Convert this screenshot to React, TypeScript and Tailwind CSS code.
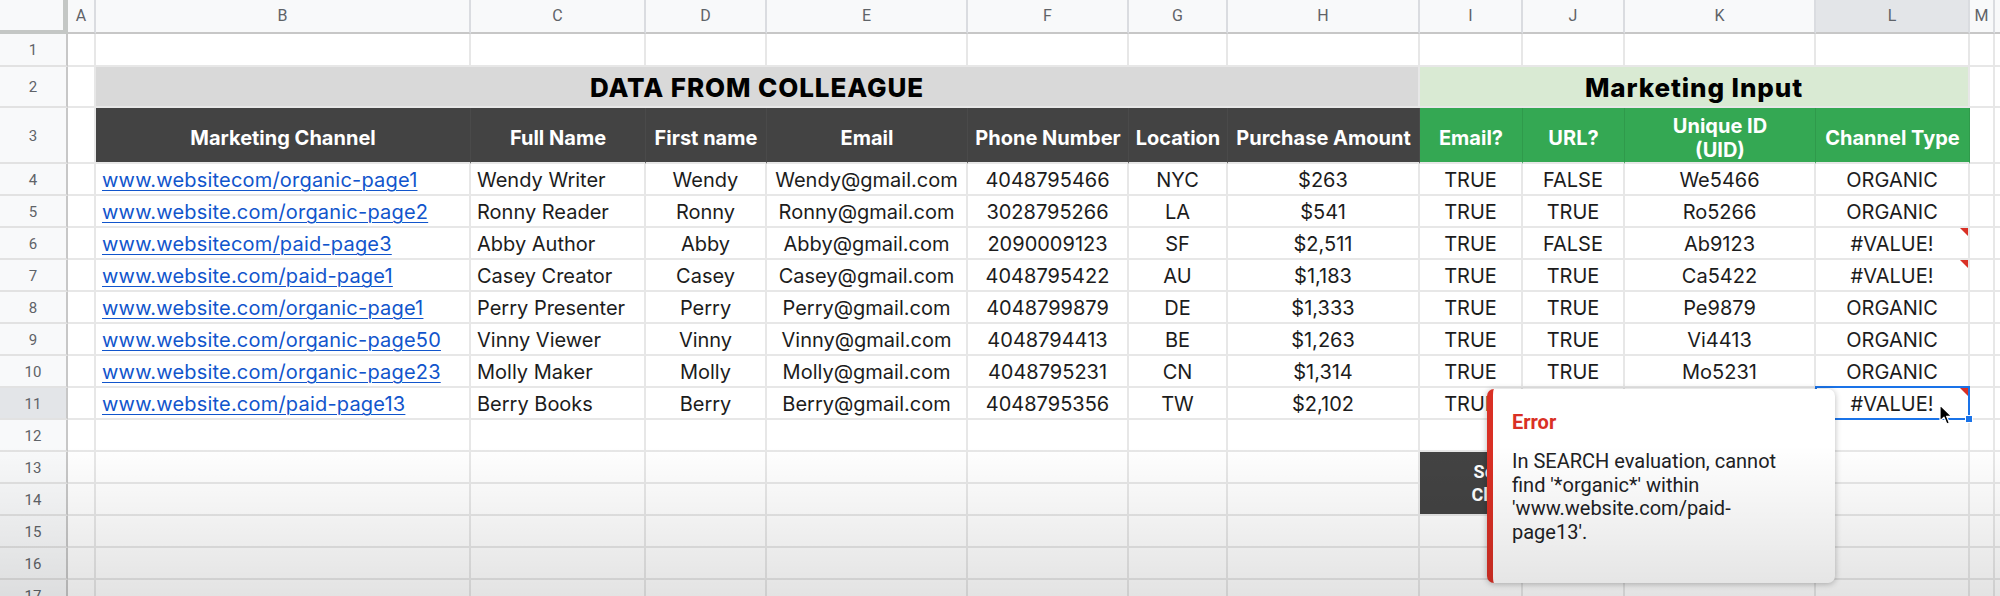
import React from "react";

const COLS = ["A", "B", "C", "D", "E", "F", "G", "H", "I", "J", "K", "L", "M"];

type Row = {
  url: string;
  full: string;
  first: string;
  email: string;
  phone: string;
  loc: string;
  amount: string;
  isEmail: string;
  isUrl: string;
  uid: string;
  channel: string;
  flag?: boolean;
};

const rows: Row[] = [
  { url: "www.websitecom/organic-page1", full: "Wendy Writer", first: "Wendy", email: "Wendy@gmail.com", phone: "4048795466", loc: "NYC", amount: "$263", isEmail: "TRUE", isUrl: "FALSE", uid: "We5466", channel: "ORGANIC" },
  { url: "www.website.com/organic-page2", full: "Ronny Reader", first: "Ronny", email: "Ronny@gmail.com", phone: "3028795266", loc: "LA", amount: "$541", isEmail: "TRUE", isUrl: "TRUE", uid: "Ro5266", channel: "ORGANIC" },
  { url: "www.websitecom/paid-page3", full: "Abby Author", first: "Abby", email: "Abby@gmail.com", phone: "2090009123", loc: "SF", amount: "$2,511", isEmail: "TRUE", isUrl: "FALSE", uid: "Ab9123", channel: "#VALUE!", flag: true },
  { url: "www.website.com/paid-page1", full: "Casey Creator", first: "Casey", email: "Casey@gmail.com", phone: "4048795422", loc: "AU", amount: "$1,183", isEmail: "TRUE", isUrl: "TRUE", uid: "Ca5422", channel: "#VALUE!", flag: true },
  { url: "www.website.com/organic-page1", full: "Perry Presenter", first: "Perry", email: "Perry@gmail.com", phone: "4048799879", loc: "DE", amount: "$1,333", isEmail: "TRUE", isUrl: "TRUE", uid: "Pe9879", channel: "ORGANIC" },
  { url: "www.website.com/organic-page50", full: "Vinny Viewer", first: "Vinny", email: "Vinny@gmail.com", phone: "4048794413", loc: "BE", amount: "$1,263", isEmail: "TRUE", isUrl: "TRUE", uid: "Vi4413", channel: "ORGANIC" },
  { url: "www.website.com/organic-page23", full: "Molly Maker", first: "Molly", email: "Molly@gmail.com", phone: "4048795231", loc: "CN", amount: "$1,314", isEmail: "TRUE", isUrl: "TRUE", uid: "Mo5231", channel: "ORGANIC" },
  { url: "www.website.com/paid-page13", full: "Berry Books", first: "Berry", email: "Berry@gmail.com", phone: "4048795356", loc: "TW", amount: "$2,102", isEmail: "TRUE", isUrl: "TRUE", uid: "Be5356", channel: "#VALUE!", flag: true },
];

const cell = "border-r-2 border-b-2 border-[#e7e7e7] flex items-center pt-[2px] overflow-hidden whitespace-nowrap";

const RowNum = ({ n, active = false }: { n: number; active?: boolean }) => (
  <div
    className={`flex items-center justify-center pt-[2px] border-r-2 border-r-[#c7c7c7] border-b-2 border-b-[#e2e2e2] font-['Roboto',sans-serif] text-[15px] text-[#5f6368] ${active ? "bg-[#e3e5e8]" : "bg-[#f8f9fa]"}`}
  >
    {n}
  </div>
);

const ErrorFlag = () => (
  <span className="absolute top-0 right-0 w-0 h-0 border-l-[8px] border-l-transparent border-t-[8px] border-t-[#d93025]" />
);

const BlankRow = ({ n }: { n: number }) => (
  <>
    <RowNum n={n} />
    {COLS.map((c) => (
      <div key={c} className={cell} />
    ))}
    <div className="border-b-2 border-[#e7e7e7]" />
  </>
);

export default function App() {
  return (
    <div className="relative w-[2000px] h-[596px] overflow-hidden bg-white">
      <div className="grid grid-cols-[68px_28px_375px_175px_121px_201px_161px_99px_192px_103px_102px_191px_154px_25px_5px] grid-rows-[34px_33px_41px_56px_repeat(14,32px)] font-['Inter',sans-serif] text-[20px] text-[#1c1c1c]">
        {/* column letters */}
        <div className="bg-[#f8f9fa] border-r-[5px] border-b-[4px] border-[#c4c7c5]" />
        {COLS.map((c) => (
          <div
            key={c}
            className={`flex items-center justify-center border-r-2 border-r-[#dadce0] border-b-2 border-b-[#c7c7c7] font-['Roboto',sans-serif] text-[16px] text-[#5f6368] ${c === "L" ? "bg-[#e3e5e8]" : "bg-[#f8f9fa]"}`}
          >
            {c}
          </div>
        ))}
        <div className="bg-[#f8f9fa] border-b-2 border-[#c7c7c7]" />

        {/* row 1 */}
        <BlankRow n={1} />

        {/* row 2: section titles */}
        <RowNum n={2} />
        <div className={cell} />
        <div className="col-span-7 flex items-center justify-center pt-[2px] bg-[#d9d9d9] border-r-2 border-b-2 border-[#e7e7e7] font-extrabold text-[26px] text-black tracking-[0.9px]">
          DATA FROM COLLEAGUE
        </div>
        <div className="col-span-4 flex items-center justify-center pt-[2px] bg-[#d9ead3] border-r-2 border-b-2 border-[#e7e7e7] font-extrabold text-[26px] text-black tracking-[0.9px]">
          Marketing Input
        </div>
        <div className={cell} />
        <div className="border-b-2 border-[#e7e7e7]" />

        {/* row 3: headers */}
        <RowNum n={3} />
        <div className={cell} />
        {["Marketing Channel", "Full Name", "First name", "Email", "Phone Number", "Location", "Purchase Amount"].map((h) => (
          <div key={h} className="flex items-center justify-center pt-[5px] bg-[#434343] border-r border-r-[#4a4a4a] border-b-2 border-b-[#e7e7e7] font-bold text-white whitespace-nowrap">
            {h}
          </div>
        ))}
        {["Email?", "URL?", "Unique ID\n(UID)", "Channel Type"].map((h) => (
          <div key={h} className="flex items-center justify-center pt-[5px] text-center bg-[#34a853] border-r border-r-[#2f9a4b] border-b-2 border-b-[#e7e7e7] font-bold text-white whitespace-pre-line leading-[24px]">
            {h}
          </div>
        ))}
        <div className={cell} />
        <div className="border-b-2 border-[#e7e7e7]" />

        {/* data rows */}
        {rows.map((r, i) => {
          const last = i === rows.length - 1;
          return (
            <React.Fragment key={r.uid}>
              <RowNum n={i + 4} active={last} />
              <div className={cell} />
              <div className={`${cell} px-[6px]`}>
                <span className="text-[#1155cc] underline underline-offset-[3px] decoration-[1px] tracking-[0.2px]">{r.url}</span>
              </div>
              <div className={`${cell} px-[6px]`}>{r.full}</div>
              <div className={`${cell} justify-center`}>{r.first}</div>
              <div className={`${cell} justify-center`}>{r.email}</div>
              <div className={`${cell} justify-center`}>{r.phone}</div>
              <div className={`${cell} justify-center`}>{r.loc}</div>
              <div className={`${cell} justify-center`}>{r.amount}</div>
              <div className={`${cell} justify-center`}>{r.isEmail}</div>
              <div className={`${cell} justify-center`}>{r.isUrl}</div>
              <div className={`${cell} justify-center`}>{r.uid}</div>
              <div className={`${cell} justify-center relative overflow-visible`}>
                {r.channel}
                {r.flag && <ErrorFlag />}
                {last && (
                  <>
                    <span className="absolute -left-[1px] -top-[2px] -right-[2px] -bottom-[2px] border-2 border-[#1a73e8]" />
                    <span className="absolute -right-[5px] -bottom-[5px] w-[8px] h-[8px] bg-[#1a73e8] border border-white" />
                  </>
                )}
              </div>
              <div className={cell} />
              <div className="border-b-2 border-[#e7e7e7]" />
            </React.Fragment>
          );
        })}

        {/* rows 12 - 17 */}
        <BlankRow n={12} />

        <RowNum n={13} />
        {COLS.slice(0, 8).map((c) => (
          <div key={c} className={cell} />
        ))}
        <div className="col-start-10 col-span-2 row-start-14 row-span-2 flex flex-col items-center justify-center bg-[#434343] border-b-2 border-[#e7e7e7] font-['Roboto',sans-serif] font-bold text-[18px] leading-[23px] text-white">
          <span>Search Data</span>
          <span>Click Counts</span>
        </div>
        <div className={cell} />
        <div className={cell} />
        <div className={cell} />
        <div className="border-b-2 border-[#e7e7e7]" />

        <RowNum n={14} />
        {COLS.slice(0, 8).map((c) => (
          <div key={c} className={cell} />
        ))}
        <div className={cell} />
        <div className={cell} />
        <div className={cell} />
        <div className="border-b-2 border-[#e7e7e7]" />

        <BlankRow n={15} />
        <BlankRow n={16} />
        <BlankRow n={17} />
      </div>

      {/* error tooltip */}
      <div className="absolute left-[1487px] top-[389px] w-[348px] h-[194px] bg-white rounded-[7px] border-l-[6px] border-l-[#d93025] shadow-[0_1px_6px_rgba(0,0,0,0.28)] pl-[19px] pt-[21px] font-['Roboto',sans-serif]">
        <div className="text-[20px] leading-[24px] font-bold text-[#d93025]">Error</div>
        <div className="mt-[16px] w-[280px] text-[20px] leading-[23.5px] text-[#202124]">
          In SEARCH evaluation, cannot find '*organic*' within 'www.website.com/paid-page13'.
        </div>
      </div>

      {/* mouse pointer */}
      <svg className="absolute left-[1939px] top-[404px]" width="14" height="22" viewBox="0 0 14 22">
        <path d="M1 1 L1 17 L5 13.2 L7.8 20 L10.4 18.9 L7.6 12.3 L12.6 12.3 Z" fill="#000" stroke="#fff" strokeWidth="1.2" strokeLinejoin="round" />
      </svg>

      {/* video-ish shading at the bottom */}
      <div className="absolute left-0 right-0 top-[445px] bottom-0 bg-linear-to-b from-transparent to-black/[0.11] pointer-events-none" />
    </div>
  );
}
